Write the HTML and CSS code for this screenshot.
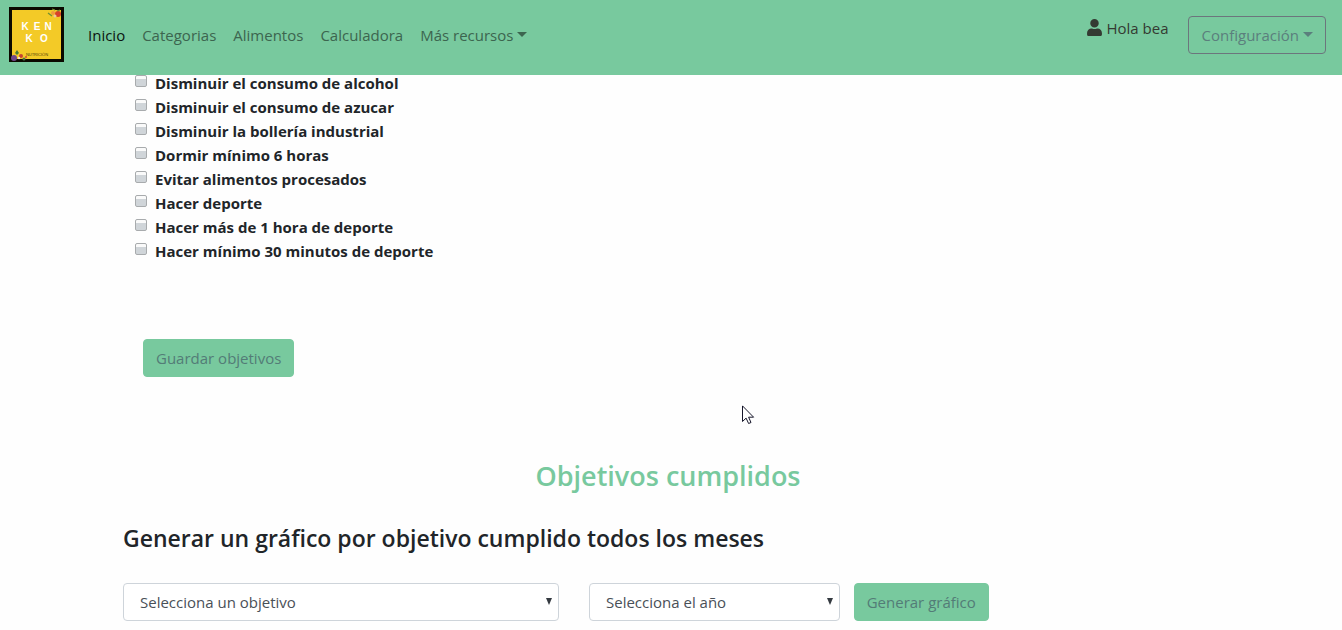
FILE: index.html
```html
<!DOCTYPE html>
<html lang="es">
<head>
<meta charset="utf-8">
<meta name="viewport" content="width=device-width, initial-scale=1">
<title>Kenko Nutrición</title>
<link rel="stylesheet" href="styles.css">
</head>
<body>
<header class="navbar">
  <a class="brand" href="#" aria-label="Kenko Nutrición">
    <svg class="logo" viewBox="0 0 55 55">
      <rect width="55" height="55" fill="#0b0900"/>
      <rect x="3" y="3" width="49" height="49" fill="#f3ca27"/>
      <g class="logo-word">
        <text x="16" y="23">K</text><text x="28" y="23">E</text><text x="39" y="23">N</text>
        <text x="20" y="35">K</text><text x="35" y="35">O</text>
      </g>
      <text class="logo-sub" x="28" y="49">NUTRICIÓN</text>
      <circle cx="49" cy="7" r="3" fill="#d8402a"/>
      <circle cx="44" cy="6" r="2" fill="#ef9a3c"/>
      <path d="M39 6l4 3M46 3l-3-1M51 3l-3 1" stroke="#6f8f35" stroke-width="1.3"/>
      <circle cx="46" cy="9" r="1.5" fill="#eec8a0"/>
      <circle cx="5" cy="51" r="3" fill="#6f478b"/>
      <path d="M8 43l2 3-2 2-2-2z" fill="#487c35"/>
      <circle cx="12" cy="49" r="2" fill="#c64332"/>
      <circle cx="10" cy="51" r="1.2" fill="#f0dfd0"/>
      <circle cx="15" cy="52" r="1.5" fill="#4b7140"/>
      <circle cx="17" cy="50" r="1" fill="#cf463a"/>
    </svg>
  </a>
  <nav class="nav-links">
    <a class="nav-link active" href="#">Inicio</a>
    <a class="nav-link" href="#">Categorias</a>
    <a class="nav-link" href="#">Alimentos</a>
    <a class="nav-link" href="#">Calculadora</a>
    <a class="nav-link caret" href="#">Más recursos</a>
  </nav>
  <div class="account">
    <span class="greeting">
      <svg class="user-icon" viewBox="0 0 448 512" fill="currentColor"><path d="M224 256c70.700 0 128-57.300 128-128S294.700 0 224 0 96 57.300 96 128s57.300 128 128 128zm89.600 32h-16.700c-22.200 10.200-46.900 16-72.900 16s-50.600-5.800-72.900-16h-16.700C60.200 288 0 348.200 0 422.400V464c0 26.500 21.500 48 48 48h352c26.500 0 48-21.500 48-48v-41.600c0-74.200-60.200-134.400-134.400-134.400z"/></svg>
      Hola bea
    </span>
    <button class="btn btn-outline caret" type="button">Configuración</button>
  </div>
</header>
<main class="content">
  <form class="goals">
    <ul class="goal-list">
      <li><label class="goal"><input class="check" type="checkbox">Disminuir el consumo de alcohol</label></li>
      <li><label class="goal"><input class="check" type="checkbox">Disminuir el consumo de azucar</label></li>
      <li><label class="goal"><input class="check" type="checkbox">Disminuir la bollería industrial</label></li>
      <li><label class="goal"><input class="check" type="checkbox">Dormir mínimo 6 horas</label></li>
      <li><label class="goal"><input class="check" type="checkbox">Evitar alimentos procesados</label></li>
      <li><label class="goal"><input class="check" type="checkbox">Hacer deporte</label></li>
      <li><label class="goal"><input class="check" type="checkbox">Hacer más de 1 hora de deporte</label></li>
      <li><label class="goal"><input class="check" type="checkbox">Hacer mínimo 30 minutos de deporte</label></li>
    </ul>
    <button class="btn btn-fill btn-save" type="button">Guardar objetivos</button>
  </form>
  <h2 class="section-title">Objetivos cumplidos</h2>
  <h3 class="chart-title">Generar un gráfico por objetivo cumplido todos los meses</h3>
  <form class="chart-form">
    <div class="picker picker-goal">
      <select class="select" aria-label="Objetivo"><option>Selecciona un objetivo</option></select>
      <svg class="picker-arrow" viewBox="0 0 6 7"><path d="M0 0h6L3 7z" fill="#343a40"/></svg>
    </div>
    <div class="picker picker-year">
      <select class="select" aria-label="Año"><option>Selecciona el año</option></select>
      <svg class="picker-arrow" viewBox="0 0 6 7"><path d="M0 0h6L3 7z" fill="#343a40"/></svg>
    </div>
    <button class="btn btn-fill" type="button">Generar gráfico</button>
  </form>
</main>
<svg class="pointer" viewBox="0 0 13 20"><path d="M.5 .9v15.600l3.600-3.400 2.500 5.400 2.400-1-2.400-5.300h5z" fill="#fff" stroke="#16162a"/></svg>
</body>
</html>
```
FILE: styles.css
```css
* { box-sizing: border-box; }
body {
  margin: 0;
  background: #fefefe;
  color: #212529;
  font: 400 15px/24px "Open Sans", "Noto Sans", sans-serif;
  overflow: hidden;
}
.navbar {
  position: fixed;
  top: 0;
  left: 0;
  right: 0;
  z-index: 2;
  display: flex;
  align-items: center;
  height: 75px;
  padding: 0 16px 6px 9px;
  background: #78c99e;
}
.brand, .logo { display: block; }
.logo { width: 55px; height: 55px; }
.logo-word {
  fill: #fff;
  font: 700 10px "Liberation Sans", sans-serif;
  text-anchor: middle;
}
.logo-sub {
  fill: #4a3b08;
  font: 400 4px "Liberation Sans", sans-serif;
  text-anchor: middle;
}
.nav-links {
  display: flex;
  gap: 17px;
  margin-left: 24px;
}
.nav-link { color: #3c654f; text-decoration: none; }
.nav-link.active { color: #0c140f; }
.caret::after {
  content: "";
  display: inline-block;
  margin-left: 4px;
  vertical-align: 4px;
  border: 5px solid transparent;
  border-top-color: currentColor;
  border-bottom: 0;
}
.account {
  display: flex;
  align-items: flex-start;
  gap: 20px;
  margin-left: auto;
}
.greeting {
  display: flex;
  align-items: center;
  gap: 4px;
  color: #343a32;
}
.user-icon { width: 15px; height: 17px; }
.btn {
  height: 38px;
  padding: 0 12px;
  border: 1px solid #78c99e;
  border-radius: 4px;
  font: inherit;
  white-space: nowrap;
}
.btn-outline { border-color: #6c757d; background: none; color: #5b7f7d; }
.btn-fill { background: #78c99e; color: #537c77; }
.content { padding: 71px 129px 8px 123px; }
.goal-list {
  margin: 0;
  padding: 0 0 0 12px;
  list-style: none;
}
.goal {
  display: flex;
  align-items: flex-start;
  gap: 8px;
  width: fit-content;
  font-weight: 700;
}
.check {
  appearance: none;
  width: 12px;
  height: 12px;
  margin: 4px 0 0;
  border: 1px solid #a8abad;
  border-radius: 2px;
  background: linear-gradient(#fafafa 30%, #d0d5d9 30%);
}
.btn-save { margin: 76px 0 0 20px; }
.section-title {
  margin: 82px 0 0;
  color: #78c99e;
  font-size: 27px;
  font-weight: 600;
  line-height: 34px;
  text-align: center;
}
.chart-title {
  margin: 31px 0 0;
  font-size: 23px;
  font-weight: 600;
  line-height: 28px;
}
.chart-form {
  display: flex;
  align-items: center;
  margin-top: 31px;
}
.picker { position: relative; }
.picker-goal { width: 40%; margin-right: 30px; }
.picker-year { width: 23%; margin-right: 14px; }
.select {
  appearance: none;
  display: block;
  width: 100%;
  height: 38px;
  padding: 0 16px;
  border: 1px solid #ced4da;
  border-radius: 4px;
  background: #fff;
  color: #495057;
  font: inherit;
}
.picker-arrow {
  position: absolute;
  top: 15px;
  right: 7px;
  width: 6px;
  height: 7px;
  pointer-events: none;
}
.pointer {
  position: absolute;
  top: 405px;
  left: 742px;
  z-index: 3;
  width: 13px;
  height: 20px;
}
```
